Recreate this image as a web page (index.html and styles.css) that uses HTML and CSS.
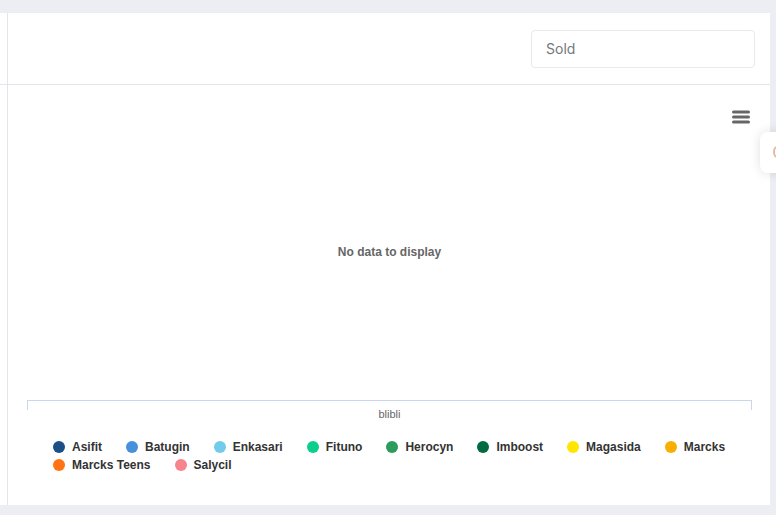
FILE: index.html
```html
<!DOCTYPE html>
<html>
<head>
<meta charset="utf-8">
<link rel="stylesheet" href="styles.css">
</head>
<body>
<div class="page">
  <div class="card">
    <div class="cell side head-side"></div>
    <div class="cell head">
      <div class="select">Sold</div>
    </div>
    <div class="cell side"></div>
    <div class="cell chart">
      <div class="chart-top">
        <svg class="menu" width="18" height="14" viewBox="0 0 18 14">
          <line x1="1.5" y1="2" x2="16.5" y2="2" stroke="#666" stroke-width="3" stroke-linecap="round"/>
          <line x1="1.5" y1="7" x2="16.5" y2="7" stroke="#666" stroke-width="3" stroke-linecap="round"/>
          <line x1="1.5" y1="12" x2="16.5" y2="12" stroke="#666" stroke-width="3" stroke-linecap="round"/>
        </svg>
      </div>
      <div class="nodata">No data to display</div>
      <div class="axis">
        <div class="axis-label">blibli</div>
      </div>
      <div class="legend">
        <div class="item"><span class="dot" style="background:#1b4f86"></span>Asifit</div>
        <div class="item"><span class="dot" style="background:#4690dc"></span>Batugin</div>
        <div class="item"><span class="dot" style="background:#71cbea"></span>Enkasari</div>
        <div class="item"><span class="dot" style="background:#0ccf8c"></span>Fituno</div>
        <div class="item"><span class="dot" style="background:#2c9b5b"></span>Herocyn</div>
        <div class="item"><span class="dot" style="background:#006a41"></span>Imboost</div>
        <div class="item"><span class="dot" style="background:#ffe500"></span>Magasida</div>
        <div class="item"><span class="dot" style="background:#f8af00"></span>Marcks</div>
        <div class="item"><span class="dot" style="background:#ff7315"></span>Marcks Teens</div>
        <div class="item"><span class="dot" style="background:#f7838e"></span>Salycil</div>
      </div>
    </div>
  </div>
</div>
<div class="float-tab"><span class="tab-icon"></span></div>
</body>
</html>
```
FILE: styles.css
```css
html, body {
  margin: 0;
  padding: 0;
}
body {
  background: #eceef3;
  width: 776px;
  height: 515px;
  overflow: hidden;
  font-family: "Liberation Sans", Arial, sans-serif;
}
.page {
  padding-top: 13px;
}
.card {
  width: 770px;
  height: 492px;
  background: #ffffff;
  display: grid;
  grid-template-columns: 8px minmax(0, 1fr);
  grid-template-rows: 72px minmax(0, 1fr);
}
.side {
  border-right: 1px solid #e4e5ec;
}
.head-side {
  border-bottom: 1px solid #e4e5ec;
}
.head {
  border-bottom: 1px solid #e4e5ec;
  display: flex;
  justify-content: flex-end;
  align-items: flex-start;
  padding: 17px 15px 0 0;
}
.select {
  box-sizing: border-box;
  width: 224px;
  height: 38px;
  border: 1px solid #e8e9ef;
  border-radius: 4px;
  padding: 0 0 0 14px;
  font-family: Inter, "Open Sans", sans-serif;
  font-size: 14px;
  color: #74777e;
  line-height: 36px;
}
.chart {
  display: flex;
  flex-direction: column;
  padding: 0 18px 0 19px;
}
.chart-top {
  height: 39px;
  display: flex;
  justify-content: flex-end;
  align-items: flex-end;
  padding-right: 2px;
}
.menu {
  display: block;
}
.nodata {
  margin-top: 121px;
  text-align: center;
  font-size: 12px;
  font-weight: bold;
  color: #666666;
  font-family: "Liberation Sans", Arial, sans-serif;
  line-height: 14px;
}
.axis {
  margin-top: 141px;
  height: 9px;
  border: 1px solid #ccd6eb;
  border-bottom: none;
}
.axis-label {
  text-align: center;
  font-size: 11px;
  color: #666666;
  font-family: "Liberation Sans", Arial, sans-serif;
  line-height: 13px;
  margin-top: 7px;
}
.legend {
  margin-top: 30px;
  padding-left: 26px;
  display: flex;
  flex-wrap: wrap;
  row-gap: 4px;
}
.item {
  display: flex;
  align-items: center;
  font-family: "Liberation Sans", Arial, sans-serif;
  font-size: 12px;
  font-weight: bold;
  color: #333333;
  line-height: 14px;
  margin-right: 24px;
}
.dot {
  width: 12px;
  height: 12px;
  border-radius: 50%;
  margin-right: 7px;
  flex: none;
}
.float-tab {
  position: fixed;
  left: 760px;
  top: 132px;
  width: 40px;
  height: 41px;
  background: #ffffff;
  border-radius: 8px;
  box-shadow: 0 0 12px rgba(0, 0, 0, 0.12);
}
.tab-icon {
  position: absolute;
  left: 13px;
  top: 14px;
  width: 8px;
  height: 12px;
  border-radius: 50%;
  border: 2px solid #e7b7a8;
  box-sizing: border-box;
}
```
